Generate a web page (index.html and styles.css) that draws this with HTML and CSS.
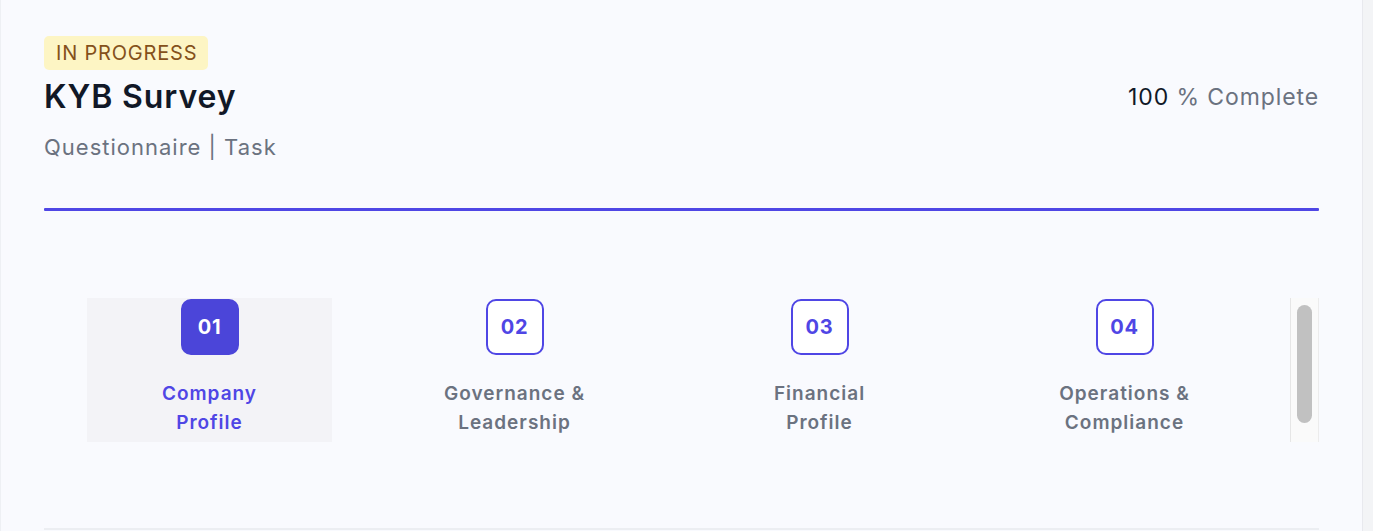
FILE: index.html
```html
<!DOCTYPE html>
<html>
<head>
<meta charset="utf-8">
<link rel="stylesheet" href="styles.css">
</head>
<body>
<div class="shell">
  <main class="panel">
    <div class="header">
      <span class="status">IN PROGRESS</span>
      <div class="title-row">
        <h1 class="title">KYB Survey</h1>
        <div class="progress-text"><span class="pct">100</span> % Complete</div>
      </div>
      <div class="subtitle">Questionnaire | Task</div>
    </div>
    <div class="progress-line"></div>
    <div class="steps-wrap">
      <div class="steps">
        <div class="step active">
          <div class="num">01</div>
          <div class="label">Company<br>Profile</div>
        </div>
        <div class="step">
          <div class="num">02</div>
          <div class="label">Governance &amp;<br>Leadership</div>
        </div>
        <div class="step">
          <div class="num">03</div>
          <div class="label">Financial<br>Profile</div>
        </div>
        <div class="step">
          <div class="num">04</div>
          <div class="label">Operations &amp;<br>Compliance</div>
        </div>
      </div>
      <div class="scrollbar"><div class="thumb"></div></div>
    </div>
    <div class="bottom-line"></div>
  </main>
  <aside class="side"></aside>
</div>
</body>
</html>
```

FILE: styles.css
```css
* { box-sizing: border-box; }
html, body { margin: 0; height: 100%; }
body {
  font-family: Inter, "Noto Sans", sans-serif;
  background: #f9fafe;
  overflow: hidden;
}
.shell {
  display: flex;
  height: 531px;
}
.panel {
  width: 1363px;
  border-left: 1px solid #eef0f4;
  border-right: 1px solid #e8e9ee;
  padding: 36px 43px 0 43px;
  background: #f9fafe;
}
.side {
  flex: 1;
  background: #f3f4f6;
}
.status {
  display: inline-block;
  background: #fdf5c4;
  color: #84511b;
  font-size: 20px;
  line-height: 34px;
  height: 34px;
  padding: 0 11px 0 12px;
  border-radius: 5px;
  letter-spacing: 0.8px;
}
.title-row {
  display: flex;
  justify-content: space-between;
  align-items: center;
  margin-top: 6px;
}
.title {
  margin: 0;
  font-size: 32px;
  font-weight: 600;
  color: #111827;
  line-height: 42px;
  letter-spacing: 0.9px;
}
.progress-text {
  font-size: 23px;
  color: #6b7280;
  letter-spacing: 0.9px;
}
.pct { color: #111827; }
.subtitle {
  margin-top: 14px;
  font-size: 22px;
  color: #6b7280;
  line-height: 30px;
  letter-spacing: 1px;
}
.progress-line {
  margin-top: 46px;
  height: 3px;
  background: #4f46e5;
  border-radius: 1px;
}
.steps-wrap {
  margin-top: 87px;
  margin-left: 43px;
  display: flex;
  height: 144px;
}
.steps {
  flex: 1;
  display: flex;
  gap: 60px;
}
.step {
  width: 245px;
  display: flex;
  flex-direction: column;
  align-items: center;
  padding-top: 1px;
}
.step.active { background: #f3f3f7; }
.num {
  width: 58px;
  height: 56px;
  border-radius: 10px;
  border: 2px solid #4f46e5;
  background: #ffffff;
  color: #4f46e5;
  font-size: 20px;
  font-weight: 700;
  letter-spacing: 0.8px;
  display: flex;
  align-items: center;
  justify-content: center;
}
.active .num {
  background: #4b45d9;
  border-color: #4b45d9;
  color: #ffffff;
}
.label {
  margin-top: 24px;
  font-size: 19px;
  font-weight: 600;
  line-height: 29px;
  color: #6b7280;
  text-align: center;
  letter-spacing: 1px;
}
.active .label { color: #4f46e5; }
.scrollbar {
  width: 29px;
  border-left: 1px solid #e6e6e6;
  border-right: 1px solid #ececec;
  background: #fafafa;
  padding: 7px 6px;
}
.thumb {
  height: 118px;
  background: #c1c1c1;
  border-radius: 8px;
}
.bottom-line {
  margin-top: 86px;
  height: 2px;
  background: #eceef2;
}
```
